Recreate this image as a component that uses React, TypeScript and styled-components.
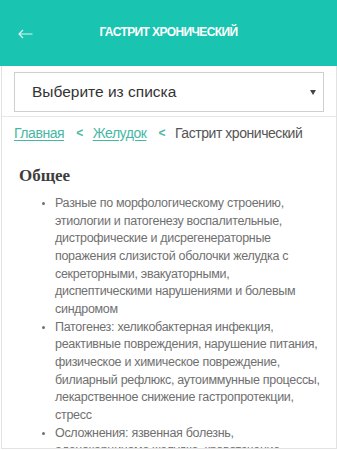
import React from "react";
import styled, { createGlobalStyle } from "styled-components";

const GlobalStyle = createGlobalStyle`
  html, body { margin: 0; padding: 0; background: #fff; }
  body { font-family: "Liberation Sans", Arial, sans-serif; }
  * { box-sizing: border-box; }
`;

const Page = styled.div`
  width: 337px;
  height: 450px;
  display: flex;
  flex-direction: column;
  overflow: hidden;
`;

const Header = styled.header`
  height: 66px;
  flex: none;
  background: #19c4b0;
  display: grid;
  grid-template-columns: 50px 1fr 50px;
  align-items: center;
`;

const BackButton = styled.button`
  border: 0;
  background: transparent;
  padding: 0 0 0 18px;
  margin-top: 2px;
  display: flex;
  align-items: center;
  cursor: pointer;
`;

const Title = styled.h1`
  margin: 0 0 2px;
  text-align: center;
  color: #fff;
  font-family: "Liberation Sans", Arial, sans-serif;
  font-size: 12px;
  font-weight: 700;
  letter-spacing: -0.6px;
  text-transform: uppercase;
`;

const Main = styled.main`
  flex: 1;
  min-height: 0;
  overflow: hidden;
  margin: 0 0 1px 1px;
  border: 1px solid #e2e2e2;
  border-top: 0;
`;

const SelectWrap = styled.div`
  padding: 6px 12px 4px;
  border-bottom: 1px solid #e8e8e8;
`;

const SelectBox = styled.div`
  height: 40px;
  border: 1px solid #cfcfcf;
  display: flex;
  align-items: center;
  justify-content: space-between;
  padding: 0 6px 0 17px;
  font-size: 15.5px;
  color: #333;
`;

const Caret = styled.span`
  width: 0;
  height: 0;
  border-left: 3px solid transparent;
  border-right: 3px solid transparent;
  border-top: 5px solid #444;
  margin-right: 1px;
`;

const Crumbs = styled.nav`
  padding: 6px 12px 0;
  display: flex;
  align-items: center;
  white-space: nowrap;
  font-size: 14px;
  letter-spacing: -0.45px;
  line-height: 20px;
  color: #555;
`;

const CrumbLink = styled.a`
  color: #46b7a5;
  text-decoration: underline;
  text-underline-offset: 2px;
`;

const Sep = styled.span`
  color: #46b7a5;
  font-weight: 700;
  font-size: 12px;
  margin: 0 10px 0 12px;
`;

const Content = styled.section`
  padding: 22px 12px 0 17px;
`;

const Heading = styled.h2`
  margin: 0;
  font-family: "Liberation Serif", "Times New Roman", serif;
  font-weight: 700;
  font-size: 17px;
  line-height: 22px;
  color: #3d3d3d;
`;

const List = styled.ul`
  margin: 8px 0 0;
  padding-left: 36px;
  font-size: 12.5px;
  letter-spacing: -0.3px;
  line-height: 17.65px;
  color: #707070;
`;

const Item = styled.li`
  &::marker {
    font-size: 10px;
  }
`;

export default function App() {
  return (
    <>
      <GlobalStyle />
      <Page>
        <Header>
          <BackButton aria-label="Назад">
            <svg width="15" height="10" viewBox="0 0 15 10" fill="none">
              <path
                d="M14.5 5H1M5 1L1 5L5 9"
                stroke="rgba(255,255,255,0.85)"
                strokeWidth="1.2"
              />
            </svg>
          </BackButton>
          <Title>Гастрит хронический</Title>
          <span />
        </Header>
        <Main>
          <SelectWrap>
            <SelectBox>
              <span>Выберите из списка</span>
              <Caret />
            </SelectBox>
          </SelectWrap>
          <Crumbs>
            <CrumbLink>Главная</CrumbLink>
            <Sep>&lt;</Sep>
            <CrumbLink>Желудок</CrumbLink>
            <Sep>&lt;</Sep>
            <span>Гастрит хронический</span>
          </Crumbs>
          <Content>
            <Heading>Общее</Heading>
            <List>
              <Item>
                Разные по морфологическому строению, этиологии и патогенезу
                воспалительные, дистрофические и дисрегенераторные поражения
                слизистой оболочки желудка с секреторными, эвакуаторными,
                диспептическими нарушениями и болевым синдромом
              </Item>
              <Item>
                Патогенез: хеликобактерная инфекция, реактивные повреждения,
                нарушение питания, физическое и химическое повреждение,
                билиарный рефлюкс, аутоиммунные процессы, лекарственное
                снижение гастропротекции, стресс
              </Item>
              <Item>
                Осложнения: язвенная болезнь, аденокарцинома желудка,
                кровотечение
              </Item>
            </List>
          </Content>
        </Main>
      </Page>
    </>
  );
}
